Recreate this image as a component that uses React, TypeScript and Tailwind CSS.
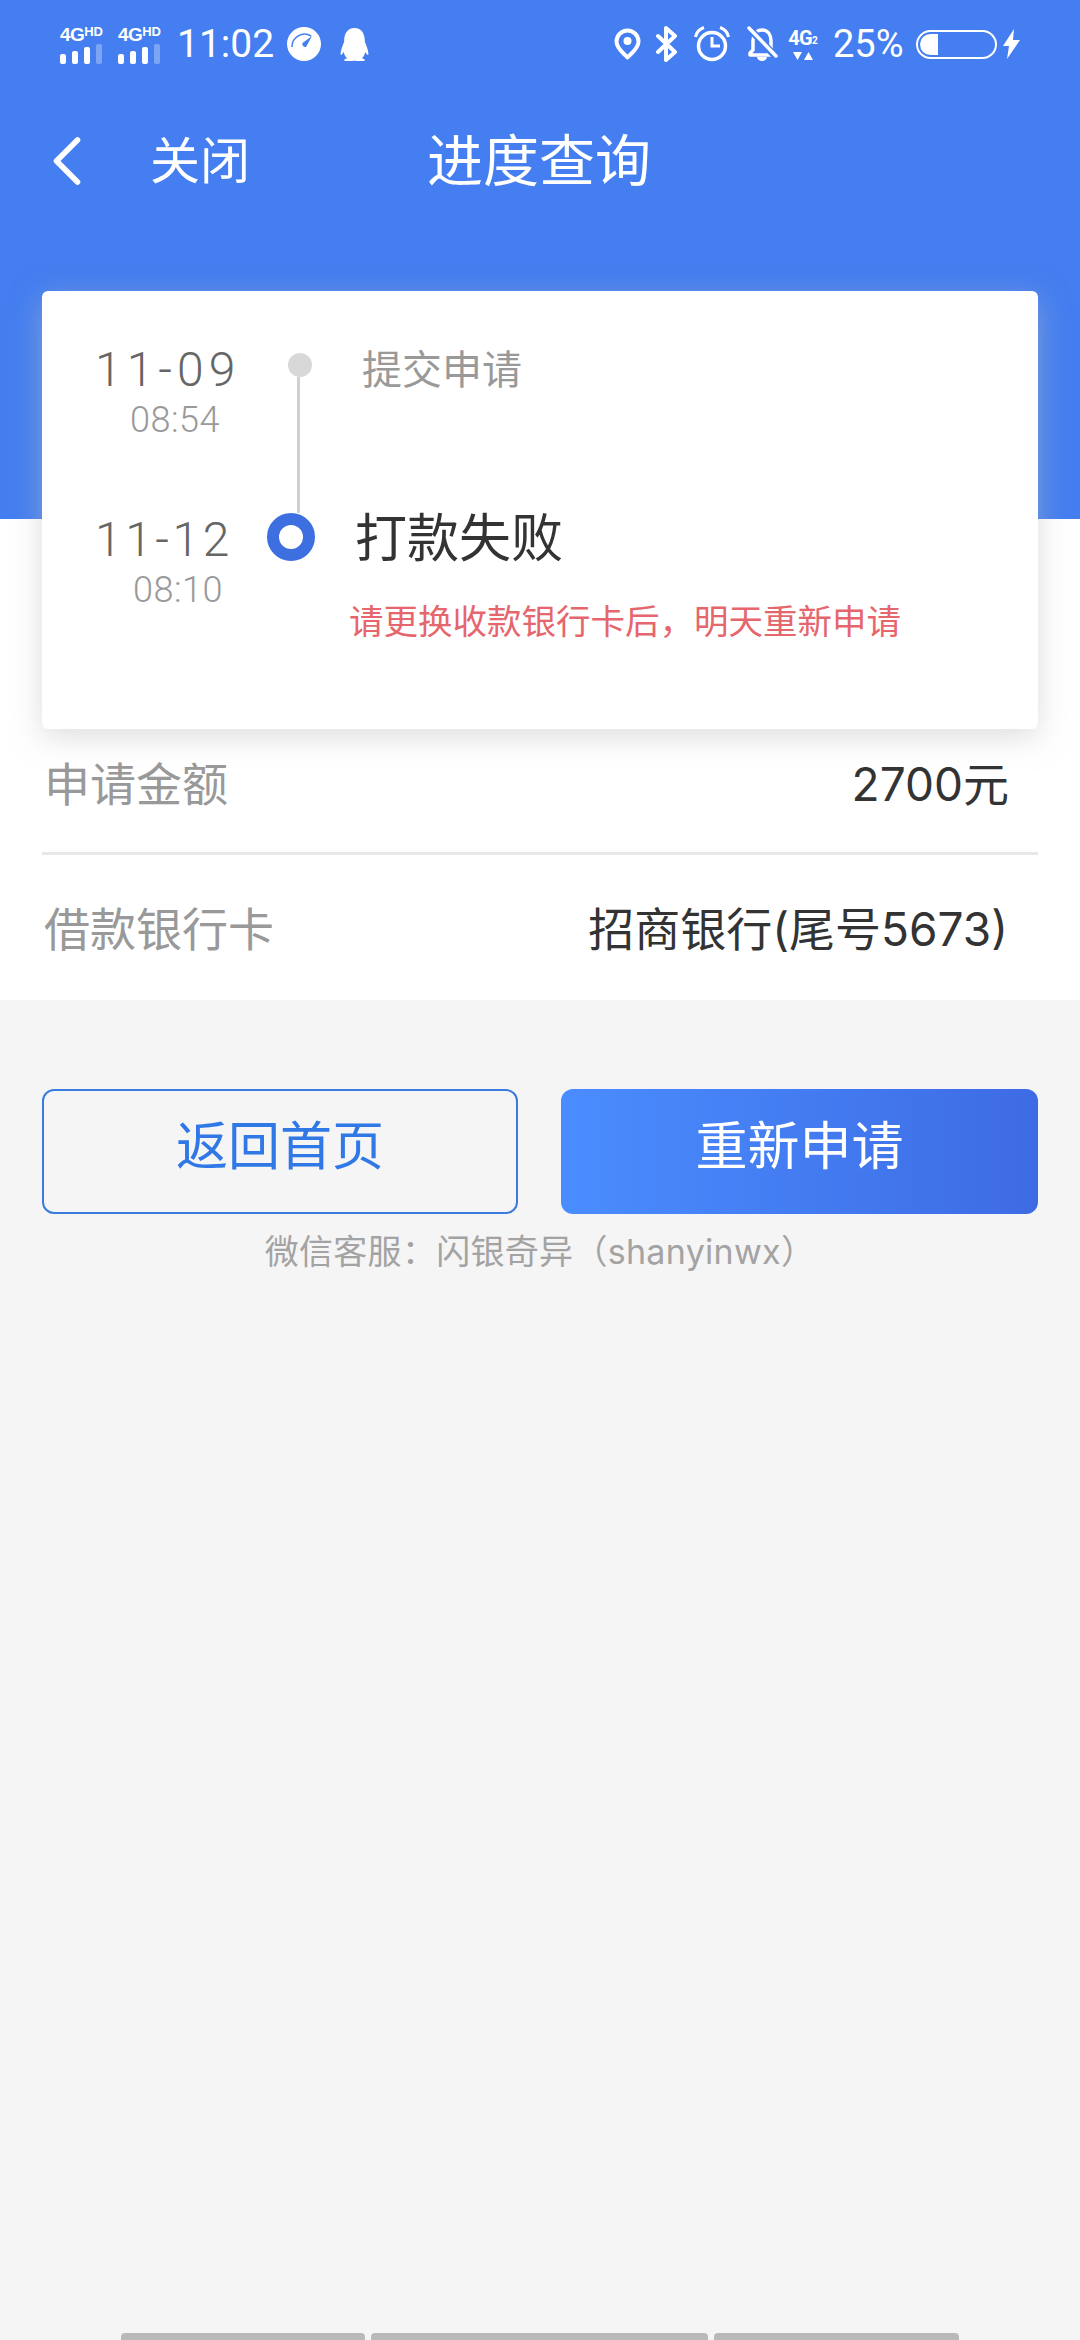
import React from 'react'
import { FaQq } from 'react-icons/fa'
import { ChevronLeft } from 'lucide-react'

const font = "font-['Inter','Noto_Sans_CJK_SC',sans-serif]"

const SignalIcon: React.FC = () => (
  <div className="flex w-[45px] flex-col">
    <div className="flex h-[17px] items-start font-['Liberation_Sans',sans-serif] font-bold leading-none text-white">
      <span className="text-[19px] tracking-[-0.5px]">4G</span>
      <span className="text-[13px] tracking-[-0.3px]">HD</span>
    </div>
    <div className="mt-[2px] flex h-[20px] items-end gap-[6px]">
      <div className="h-[10px] w-[6px] rounded-[2px] bg-white" />
      <div className="h-[13px] w-[6px] rounded-[2px] bg-white" />
      <div className="h-[17px] w-[6px] rounded-[2px] bg-white" />
      <div className="h-[20px] w-[6px] rounded-[2px] bg-white/30" />
    </div>
  </div>
)

const GaugeIcon: React.FC = () => (
  <svg width="34" height="34" viewBox="0 0 34 34">
    <circle cx="17" cy="17" r="17" fill="#fff" />
    <path d="M5 20a12.5 12.5 0 0 1 19-11" fill="none" stroke="#447ef0" strokeWidth="1.6" />
    <path d="M25 9l-9.5 7a3 3 0 0 0 3.5 4z" fill="#447ef0" />
  </svg>
)

const PinIcon: React.FC = () => (
  <svg width="27" height="32" viewBox="0 0 27 32">
    <path d="M13.5 2.5a11 11 0 0 1 11 11c0 7-7 11.500-11 16-4-4.500-11-9-11-16a11 11 0 0 1 11-11z" fill="none" stroke="#fff" strokeWidth="4" strokeLinejoin="round" />
    <circle cx="13.5" cy="13" r="4" fill="#fff" />
  </svg>
)

const BluetoothIcon: React.FC = () => (
  <svg width="24" height="36" viewBox="0 0 24 36">
    <path d="M3 10l17 16-9 8V2l9 8L3 26" fill="none" stroke="#fff" strokeWidth="4" strokeLinecap="round" strokeLinejoin="round" />
  </svg>
)

const AlarmIcon: React.FC = () => (
  <svg width="36" height="36" viewBox="0 0 36 36">
    <circle cx="18" cy="20" r="13.500" fill="none" stroke="#fff" strokeWidth="3.500" />
    <path d="M18 11v9h8" fill="none" stroke="#fff" strokeWidth="3" />
    <path d="M1.500 11C2.500 6 5.500 3 10 1.500M34.500 11C33.500 6 30.500 3 26 1.500" fill="none" stroke="#fff" strokeWidth="3" />
  </svg>
)

const BellOffIcon: React.FC = () => (
  <svg width="32" height="36" viewBox="0 0 32 36">
    <path d="M16 4c-6 0-9 5-9 11v9l-3 3v2h24v-2l-3-3v-9c0-6-3-11-9-11z" fill="none" stroke="#fff" strokeWidth="3.500" strokeLinejoin="round" />
    <path d="M11 31h10a5 4 0 0 1-10 0z" fill="#fff" />
    <path d="M3 2l27 29" stroke="#447ef0" strokeWidth="7" />
    <path d="M3 2l27 28" stroke="#fff" strokeWidth="3.500" strokeLinecap="round" />
  </svg>
)

const NetworkIcon: React.FC = () => (
  <div className="flex w-[34px] flex-col items-center font-['Roboto',sans-serif] font-bold leading-none text-white">
    <div className="flex h-[20px] items-start">
      <span className="text-[20px] tracking-[-0.8px]">4G</span>
      <span className="mt-[8px] text-[10px]">2</span>
    </div>
    <svg className="mt-[3px]" width="24" height="10" viewBox="0 0 24 10">
      <path d="M2 1h9l-4.500 8zM13 9h9l-4.500-8z" fill="#fff" />
    </svg>
  </div>
)

const BatteryIcon: React.FC = () => (
  <div className="flex h-[29px] w-[81px] items-stretch rounded-full border-2 border-white p-[2px]">
    <div className="w-[18px] rounded-l-full bg-white" />
  </div>
)

const BoltIcon: React.FC = () => (
  <svg width="17" height="30" viewBox="0 0 17 30">
    <path d="M11 0L0 17h6l-2 13L17 11h-7z" fill="#fff" />
  </svg>
)

const InfoRow: React.FC<{ label: string; value: string; className?: string }> = ({ label, value, className }) => (
  <div className={`flex items-center justify-between text-[46px] leading-none ${className ?? ''}`}>
    <span className="text-[#999999]">{label}</span>
    <span className="text-[#333333]">{value}</span>
  </div>
)

export default function App() {
  return (
    <div className={`flex h-[2340px] w-[1080px] flex-col overflow-hidden bg-[#f5f5f5] ${font}`}>
      {/* Blue header */}
      <div className="h-[519px] shrink-0 bg-[#447ef0] text-white">
        <div className="flex h-[84px] items-center justify-between pl-[60px] pr-[60px] pt-[4px]">
          <div className="flex items-center">
            <SignalIcon />
            <div className="ml-[13px]"><SignalIcon /></div>
            <span className="ml-[14px] w-[96px] font-['Roboto',sans-serif] text-[39px] leading-none">11:02</span>
            <div className="ml-[14px]"><GaugeIcon /></div>
            <FaQq className="ml-[17px]" size={33} />
          </div>
          <div className="flex items-center">
            <PinIcon />
            <div className="ml-[14px]"><BluetoothIcon /></div>
            <div className="ml-[15px]"><AlarmIcon /></div>
            <div className="ml-[16px]"><BellOffIcon /></div>
            <div className="ml-[8px]"><NetworkIcon /></div>
            <span className="ml-[13px] w-[70px] font-['Roboto',sans-serif] text-[38px] leading-none">25%</span>
            <div className="ml-[13px]"><BatteryIcon /></div>
            <div className="ml-[6px]"><BoltIcon /></div>
          </div>
        </div>
        <div className="mt-[35px] flex items-center">
          <ChevronLeft className="ml-[25px]" size={84} strokeWidth={1.6} />
          <span className="ml-[41px] text-[50px] leading-none">关闭</span>
          <span className="ml-[177px] text-[56px] leading-none">进度查询</span>
        </div>
      </div>

      <div className="shrink-0 bg-white">
        {/* Progress card */}
        <div className="relative z-10 mx-[42px] -mt-[228px] h-[438px] rounded-[6px] bg-white pl-[53px] pt-[55px] shadow-[0_8px_30px_rgba(190,190,190,0.5)]">
          <div className="flex h-[167px]">
            <div className="w-[182px] text-[#666666]">
              <div className="font-['Roboto',sans-serif] text-[48px] font-light leading-none tracking-[5px]">11-09</div>
              <div className="ml-[35px] mt-[8px] font-['Roboto',sans-serif] text-[36px] font-light leading-none tracking-[0.5px] text-[#999999]">08:54</div>
            </div>
            <div className="-mt-[3px] flex w-[46px] flex-col">
              <div className="ml-[11px] mt-[10px] h-[24px] w-[24px] shrink-0 rounded-full bg-[#d8d8d8]" />
              <div className="ml-[20px] w-[3px] flex-1 bg-[#d0d0d0]" />
            </div>
            <div className="ml-[39px] mt-[4px] text-[40px] leading-none text-[#999999]">提交申请</div>
          </div>
          <div className="flex">
            <div className="w-[172px] pt-[3px] text-[#666666]">
              <div className="font-['Roboto',sans-serif] text-[48px] font-light leading-none tracking-[3.500px]">11-12</div>
              <div className="ml-[38px] mt-[8px] font-['Roboto',sans-serif] text-[36px] font-light leading-none tracking-[0.5px] text-[#999999]">08:10</div>
            </div>
            <div className="h-[48px] w-[48px] shrink-0 rounded-full border-[12px] border-[#3d6fe0] bg-white" />
            <div className="ml-[34px] flex flex-col">
              <div className="ml-[6px] text-[52px] leading-none text-[#333333]">打款失败</div>
              <div className="mt-[40px] text-[34.500px] leading-none text-[#e5666c]">请更换收款银行卡后，明天重新申请</div>
            </div>
          </div>
        </div>

        {/* Amount rows */}
        <div className="flex h-[271px] flex-col px-[42px]">
          <InfoRow label="申请金额" value="2700元" className="h-[123px] pb-[14px] pl-[2px] pr-[29px]" />
          <div className="h-[3px] bg-[#e8e8e8]" />
          <InfoRow label="借款银行卡" value="招商银行(尾号5673)" className="h-[145px] pt-[3px] pl-[2px] pr-[30px]" />
        </div>
      </div>

      {/* Actions */}
      <div className="mt-[89px] flex justify-between px-[42px]">
        <button className="h-[125px] w-[476px] rounded-[12px] border-2 border-[#3a7be0] pb-[10px] text-[52px] leading-none text-[#2f78e6]">
          返回首页
        </button>
        <button className="h-[125px] w-[477px] rounded-[12px] bg-gradient-to-r from-[#4a8dff] to-[#3e6be4] pb-[10px] text-[52px] leading-none text-white">
          重新申请
        </button>
      </div>
      <div className="mt-[21px] text-center text-[34px] leading-none tracking-[0.3px] text-[#a3a3a3]">微信客服：闪银奇异（shanyinwx）</div>

      {/* Bottom gesture bar */}
      <div className="mt-auto flex h-[7px] justify-center gap-[6px]">
        <div className="w-[244px] rounded-t-[4px] bg-[#b9b9b9]" />
        <div className="w-[337px] rounded-t-[4px] bg-[#b9b9b9]" />
        <div className="w-[245px] rounded-t-[4px] bg-[#b9b9b9]" />
      </div>
    </div>
  )
}
